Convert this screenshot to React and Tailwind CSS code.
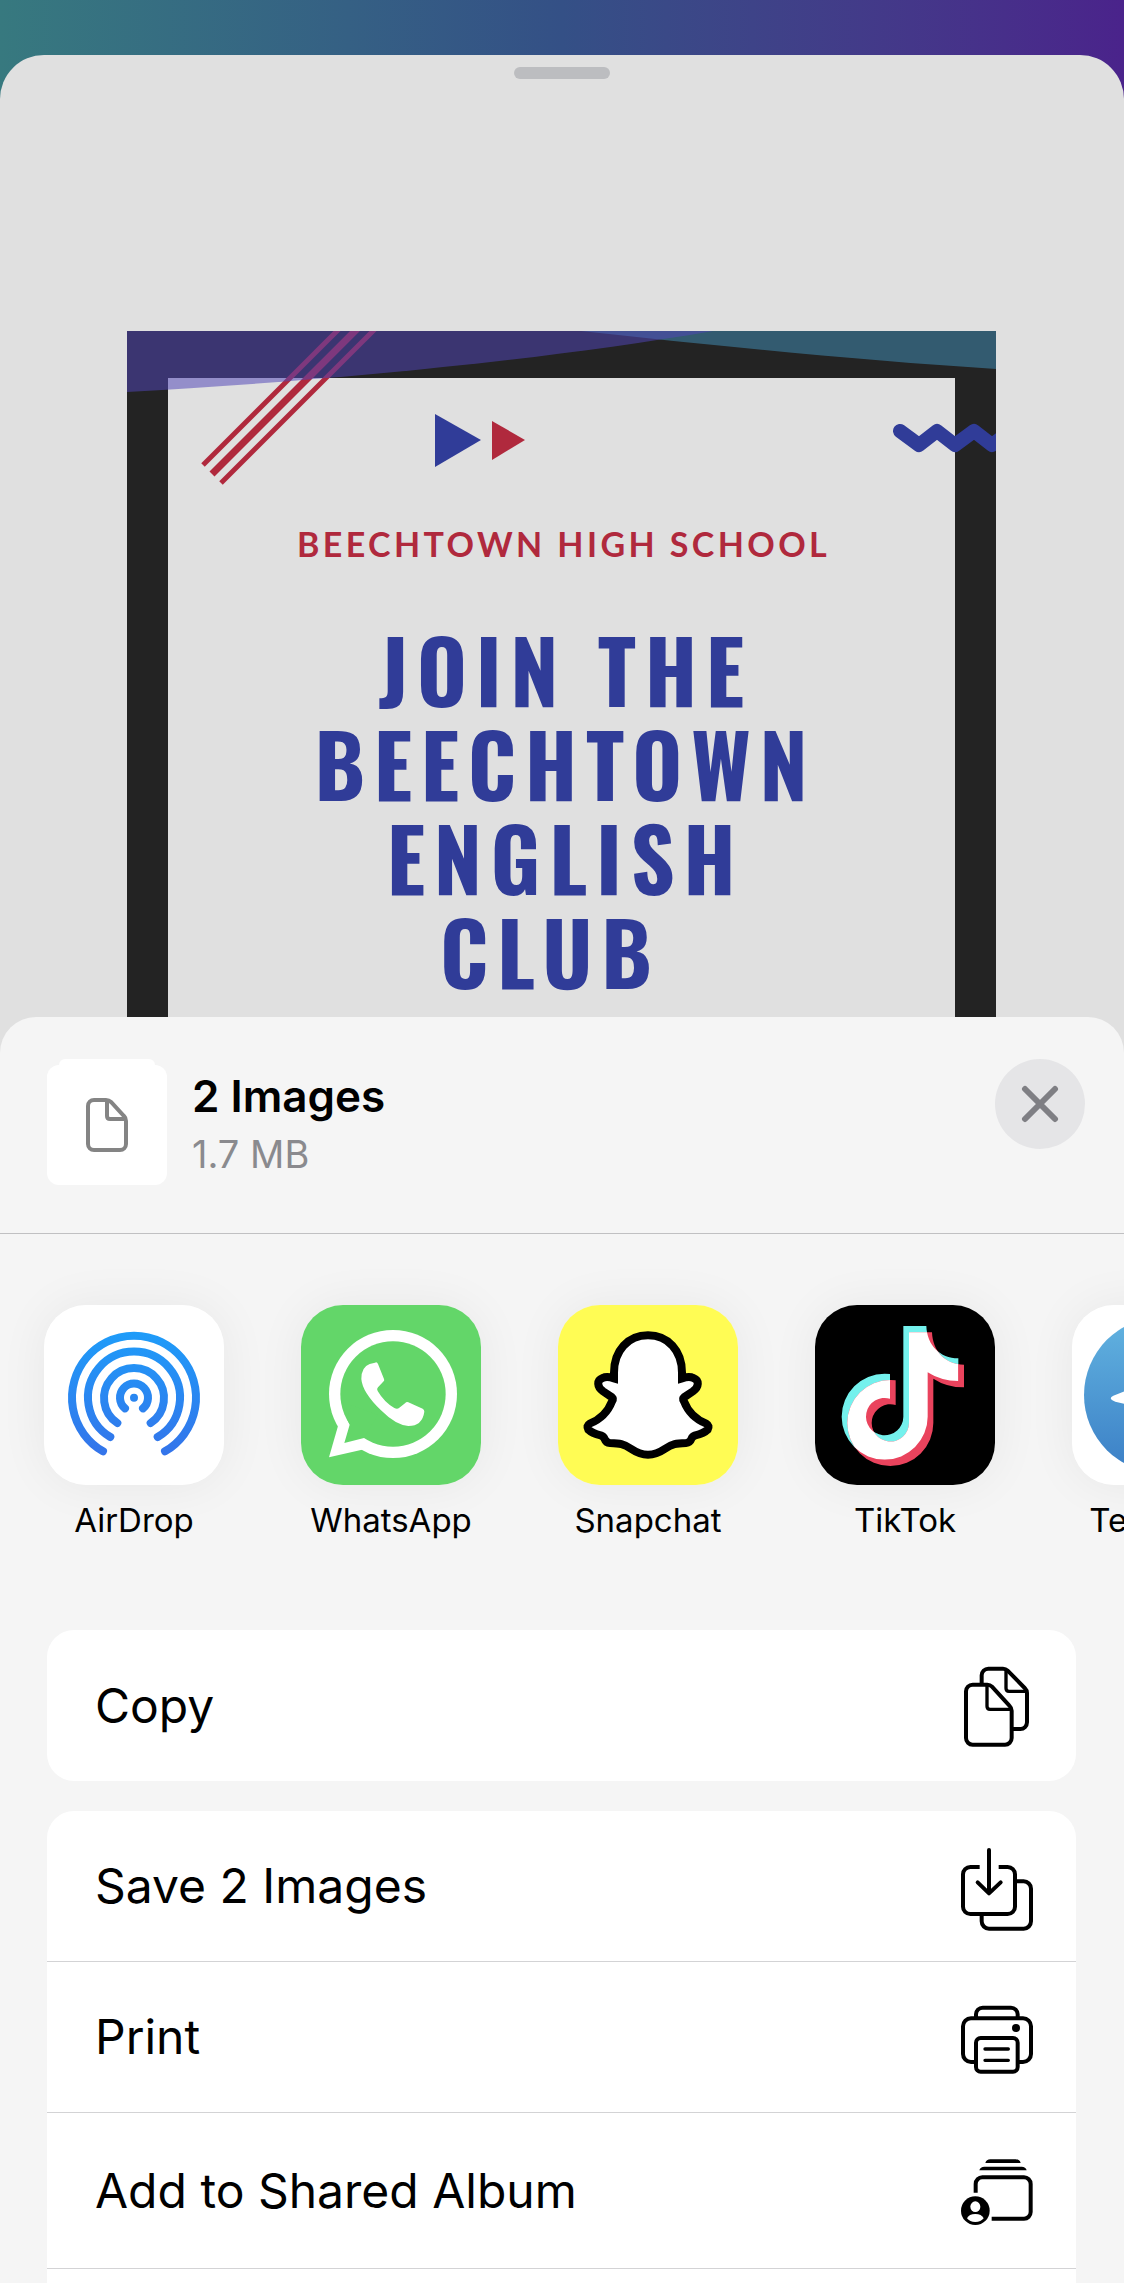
import { useId } from "react";

const AirDropIcon = () => (
  <svg viewBox="0 0 540 540" className="size-full" aria-hidden="true">
    <defs>
      <linearGradient id="airdrop" gradientUnits="userSpaceOnUse" x1="0" y1="80" x2="0" y2="450">
        <stop offset="0" stopColor="#1e9cf9" />
        <stop offset="1" stopColor="#3474ea" />
      </linearGradient>
    </defs>
    <rect width="540" height="540" fill="#fff" />
    <g fill="none" stroke="url(#airdrop)" strokeWidth="24" strokeLinecap="round">
      <path d="M177 439A186 186 0 1 1 363 439" />
      <path d="M199 396A138 138 0 1 1 341 396" />
      <path d="M220 354A90 90 0 1 1 320 354" />
      <path d="M243 310A42 42 0 1 1 297 310" />
    </g>
    <circle cx="270" cy="278" r="12" fill="url(#airdrop)" />
  </svg>
);

const WhatsAppIcon = () => (
  <svg viewBox="0 0 540 540" className="size-full" aria-hidden="true">
    <rect width="540" height="540" fill="#63d669" />
    <g fill="#fff">
      <circle cx="276" cy="267" r="192" />
      <path d="M84 457L111 363L200 330L183 434Z" />
    </g>
    <g fill="#63d669">
      <circle cx="276" cy="267" r="158" />
      <path d="M146 359L130 414L189 399L230 330L150 300L138 343Z" />
    </g>
    <path
      fill="#fff"
      d="M222 173Q228 170 231 177L249 222Q251 226 248 229L231 247Q226 252 230 258Q250 292 280 309Q289 314 295 308L312 295Q317 289 322 292L365 311Q370 314 370 320Q364 363 322 363Q285 361 240 316Q184 262 181 222Q181 186 206 177Z"
    />
  </svg>
);

const SnapchatIcon = () => (
  <svg viewBox="0 0 540 540" className="size-full" aria-hidden="true">
    <rect width="540" height="540" fill="#fffc54" />
    <path
      fill="#fff"
      stroke="#000"
      strokeWidth="24"
      d="M270 91C210 91 168 137 168 203V220Q146 213 134 219C115 226 117 246 135 259Q150 269 162 277Q167 281 162 289C148 325 122 345 95 356Q84 362 91 374Q102 385 128 391Q137 394 140 402Q144 413 156 414C185 415 197 416 220 432Q245 449 270 449Q295 449 320 432C343 416 355 415 384 414Q396 413 400 402Q403 394 412 391Q438 385 449 374Q456 362 445 356C418 345 392 325 378 289Q373 281 378 277Q390 269 405 259C423 246 425 226 406 219Q394 213 372 220V203C372 137 330 91 270 91Z"
    />
  </svg>
);

const NOTE =
  "M265 63H334C336 120 374 160 430 160V228Q378 228 338 202V335A129 129 0 1 1 209 206Q217 206 225 207V281A56 56 0 1 0 265 335Z";

const TikTokIcon = () => {
  const clip = useId();
  return (
    <svg viewBox="0 0 540 540" className="size-full" aria-hidden="true">
      <clipPath id={clip}>
        <path d={NOTE} />
      </clipPath>
      <rect width="540" height="540" fill="#000" />
      <path d={NOTE} fill="#74f1ed" />
      <path d={NOTE} fill="#ea435d" transform="translate(17 19)" />
      <g clipPath={`url(#${clip})`}>
        <path d={NOTE} fill="#fff" transform="translate(17 19)" />
      </g>
    </svg>
  );
};

const TelegramIcon = () => (
  <svg viewBox="0 0 540 540" className="size-full" aria-hidden="true">
    <defs>
      <linearGradient id="telegram" x1="0" y1="0" x2="0" y2="1">
        <stop offset="0" stopColor="#62b3e0" />
        <stop offset="1" stopColor="#3b7fc6" />
      </linearGradient>
    </defs>
    <rect width="540" height="540" fill="#fff" />
    <circle cx="270" cy="270" r="234" fill="url(#telegram)" />
    <path fill="#fff" d="M124 272L392 166Q408 164 406 182L364 374Q358 390 342 380L226 312L130 290Q106 281 124 272Z" />
  </svg>
);

const CopyIcon = () => (
  <>
    <path d="M62 68V43a20 20 0 0 1 20-20h44q8 0 14 6l51 52q7 7 7 15V184a20 20 0 0 1-20 20H156" />
    <path strokeWidth="10" d="M135 26V82q0 9 9 9H196" />
    <path d="M79 71H35a20 20 0 0 0-20 20V231a20 20 0 0 0 20 20H132a20 20 0 0 0 20-20V149q0-8-7-15L93 77q-6-6-14-6Z" />
    <path strokeWidth="10" d="M78 74V136q0 9 9 9H150" />
  </>
);

const SaveIcon = () => (
  <>
    <path d="M56 78H28a22 22 0 0 0-22 22V197a22 22 0 0 0 22 22H140a22 22 0 0 0 22-22V100a22 22 0 0 0-22-22H113" />
    <path d="M166 121H188a22 22 0 0 1 22 22V241a22 22 0 0 1-22 22H84a22 22 0 0 1-22-22V222" />
    <path strokeLinecap="round" strokeLinejoin="round" d="M84 27V157M50 124L84 157L119 124" />
  </>
);

const PrintIcon = () => (
  <>
    <path d="M45 76V67a20 20 0 0 1 20-20H150a20 20 0 0 1 20 20V76" />
    <path d="M42 210H30a24 24 0 0 1-24-24V103a24 24 0 0 1 24-24H186a24 24 0 0 1 24 24V186a24 24 0 0 1-24 24H173" />
    <rect x="45" y="138" width="125" height="101" rx="14" />
    <path strokeWidth="10" strokeLinecap="round" d="M72 171H142M72 205H142" />
    <circle cx="165" cy="108" r="12" fill="#000" stroke="none" />
  </>
);

const AlbumIcon = () => (
  <>
    <path fill="#000" stroke="none" d="M73 51Q76 40 88 40H164Q176 40 179 51ZM55 73Q58 62 70 62H182Q194 62 197 73Z" />
    <path d="M44 140V114a20 20 0 0 1 20-20H189a20 20 0 0 1 20 20V198a20 20 0 0 1-20 20H92" />
    <circle cx="43" cy="194" r="43" fill="#000" stroke="none" />
    <ellipse cx="43" cy="182" rx="15" ry="16" fill="#fff" stroke="none" />
    <path fill="#fff" stroke="none" d="M18 217Q24 204 43 204T68 217Q60 228 43 228T18 217Z" />
  </>
);

const apps = [
  { name: "AirDrop", Icon: AirDropIcon },
  { name: "WhatsApp", Icon: WhatsAppIcon },
  { name: "Snapchat", Icon: SnapchatIcon },
  { name: "TikTok", Icon: TikTokIcon },
  { name: "Telegram", Icon: TelegramIcon },
];

const imageActions = [
  { label: "Save 2 Images", Icon: SaveIcon, height: "h-[151px]" },
  { label: "Print", Icon: PrintIcon, height: "h-[151px]" },
  { label: "Add to Shared Album", Icon: AlbumIcon, height: "h-[156px]" },
];

function ActionRow({ label, Icon, className }) {
  return (
    <button
      type="button"
      className={`flex w-full items-center justify-between pr-[43px] pl-12 text-left text-[48px] leading-none ${className}`}
    >
      {label}
      <svg viewBox="0 0 216 270" className="h-[90px] w-[72px]" fill="none" stroke="#000" strokeWidth="12" aria-hidden="true">
        <Icon />
      </svg>
    </button>
  );
}

function Poster() {
  return (
    <div className="relative mr-32 ml-[127px] overflow-hidden bg-[#232323] px-[41px] pt-[47px]">
      <div className="bg-[#e0e0e0] pt-[141px] pb-20 pl-1 text-center">
        <p className="font-['Lato',sans-serif] text-[34px] leading-[50px] font-bold tracking-widest text-[#b0293d]">
          BEECHTOWN HIGH SCHOOL
        </p>
        <h1 className="mt-[52px] pl-1 font-['Oswald','Liberation_Sans',sans-serif] text-[86px] leading-[94px] font-bold tracking-widest text-[#303c98]">
          JOIN THE
          <br />
          BEECHTOWN
          <br />
          ENGLISH
          <br />
          CLUB&nbsp;
        </h1>
      </div>
      {/* decorative shapes over the frame */}
      <svg viewBox="0 0 869 160" className="absolute inset-x-0 top-0 w-full" aria-hidden="true">
        <g stroke="#b0293d" fill="none">
          <path strokeWidth="5" d="M76 134L214 -4" />
          <path strokeWidth="7" d="M85 143L232 -4" />
          <path strokeWidth="5" d="M94 152L250 -4" />
        </g>
        <path fill="#3f84a8" fillOpacity="0.58" d="M454 0C600 16 740 30 869 38V0Z" />
        <path fill="#5246b8" fillOpacity="0.53" d="M0 61C180 51 400 32 586 0H0Z" />
        <path fill="#303c98" d="M308 83L354 109L308 136Z" />
        <path fill="#b0293d" d="M365 90L398 109L365 129Z" />
        <path
          fill="none"
          stroke="#303c98"
          strokeWidth="14"
          strokeLinecap="round"
          strokeLinejoin="round"
          d="M773 100L792 114L810 100L828 114L847 100L865 114L884 100"
        />
      </svg>
    </div>
  );
}

export default function App() {
  return (
    <div className="flex h-screen flex-col overflow-hidden bg-linear-to-r from-[#37797f] via-[#345086] to-[#4a238b] pt-[55px] font-['Inter',sans-serif] text-black">
      <section className="shrink-0 rounded-t-[44px] bg-[#e0e0e0] pt-3">
        <div className="mx-auto h-3 w-24 rounded-full bg-[#bcbdc0]" />
        <div className="mt-[252px] h-[722px] overflow-hidden">
          <Poster />
        </div>
      </section>

      <main className="relative -mt-9 flex min-h-0 flex-1 flex-col rounded-t-[36px] bg-[#f5f5f5]">
        <header className="flex shrink-0 items-start border-b border-[#c0c0c2] pt-[42px] pr-[39px] pb-12 pl-[47px]">
          <div className="flex w-[120px] flex-col items-center">
            <div className="h-[6px] w-24 rounded-t-lg bg-white" />
            <div className="flex size-[120px] items-center justify-center rounded-xl bg-white">
              <svg viewBox="0 0 42 54" className="h-[54px] w-[42px]" fill="none" stroke="#848484" strokeWidth="4" aria-hidden="true">
                <path d="M8 2H20q3 0 5 2L38 18q2 2 2 5V46a6 6 0 0 1-6 6H8a6 6 0 0 1-6-6V8a6 6 0 0 1 6-6Z" />
                <path d="M21 3V18q0 3 3 3H39" />
              </svg>
            </div>
          </div>
          <div className="ml-[25px] flex-1 pt-3">
            <h2 className="text-[44px] leading-[50px] font-semibold">2 Images</h2>
            <p className="mt-2 text-[38px] leading-[50px] text-[#8a8a8e]">1.7 MB</p>
          </div>
          <button
            type="button"
            aria-label="Close"
            className="flex size-[90px] items-center justify-center rounded-full bg-[#e5e5e7]"
          >
            <svg viewBox="0 0 38 38" className="size-[38px]" stroke="#7f7f84" strokeWidth="6" strokeLinecap="round" aria-hidden="true">
              <path d="M4 4L34 34M34 4L4 34" />
            </svg>
          </button>
        </header>

        <div className="flex shrink-0 gap-[77px] overflow-hidden px-11 pt-[71px] pb-[91px]">
          {apps.map(({ name, Icon }) => (
            <button key={name} type="button" className="flex w-[180px] shrink-0 flex-col items-center">
              <span className="block size-[180px] overflow-hidden rounded-[42px] shadow-[0_0_50px_rgba(0,0,0,0.06)]">
                <Icon />
              </span>
              <span className="mt-4 text-[33px] leading-[38px]">{name}</span>
            </button>
          ))}
        </div>

        <div className="mr-12 ml-[47px] flex min-h-0 flex-1 flex-col gap-[30px]">
          <div className="shrink-0 rounded-[27px] bg-white">
            <ActionRow label="Copy" Icon={CopyIcon} className="h-[151px]" />
          </div>
          <div className="min-h-0 flex-1 rounded-t-[27px] bg-white">
            {imageActions.map(({ label, Icon, height }) => (
              <ActionRow key={label} label={label} Icon={Icon} className={`border-b border-[#d3d3d5] ${height}`} />
            ))}
          </div>
        </div>
      </main>
    </div>
  );
}
